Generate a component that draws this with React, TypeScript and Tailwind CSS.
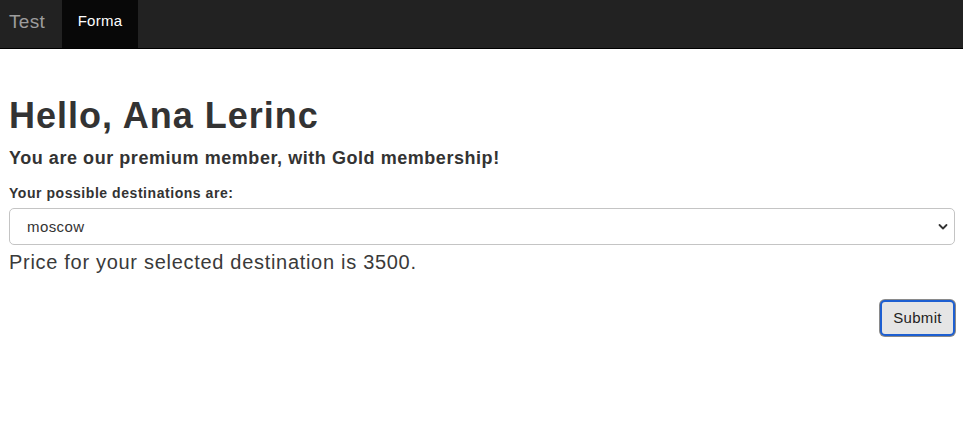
export default function App() {
  return (
    <div className="min-h-screen bg-white font-['Liberation_Sans',Arial,sans-serif] text-[#333]">
      <nav className="flex h-[49px] border-b border-black bg-[#222]">
        <span className="flex items-center pb-[4px] pl-[9px] pr-[17px] text-[19px] tracking-[0.3px] text-[#9d9d9d]">
          Test
        </span>
        <span className="flex w-[76px] items-center justify-center bg-[#080808] pb-[5px] text-[15px] tracking-[0.3px] text-white">
          Forma
        </span>
      </nav>

      <main className="pl-[9px] pr-[8px]">
        <h1 className="mt-[47px] text-[36px] leading-[1.1] font-bold tracking-[1px]">
          Hello, Ana Lerinc
        </h1>
        <h4 className="mt-[13px] text-[18px] leading-[1.1] font-bold tracking-[0.55px]">
          You are our premium member, with Gold membership!
        </h4>
        <label className="mt-[15px] block text-[14px] leading-[20px] font-bold tracking-[0.55px]">
          Your possible destinations are:
        </label>
        <div className="relative mt-[5px]">
          <select
            defaultValue="moscow"
            className="h-[37px] w-full appearance-none rounded-[5px] border border-[#c4c4c4] bg-white pl-[17px] text-[15px] tracking-[0.4px] text-[#333] outline-none"
          >
            <option value="moscow">moscow</option>
            <option value="paris">paris</option>
            <option value="london">london</option>
          </select>
          <svg
            className="pointer-events-none absolute top-[15px] right-[7px]"
            width="10"
            height="8"
            viewBox="0 0 10 8"
          >
            <path
              d="M1.5 2 L5 5.5 L8.5 2"
              fill="none"
              stroke="#333"
              strokeWidth="1.8"
              strokeLinecap="round"
              strokeLinejoin="round"
            />
          </svg>
        </div>
        <p className="mt-[3px] text-[20px] leading-[28px] tracking-[0.7px] text-[#3a3a3a]">
          Price for your selected destination is 3500.
        </p>

        <div className="mt-[24px] flex justify-end">
          <button
            type="submit"
            className="h-[36px] w-[75px] rounded-[5px] border-2 border-[#1d5fd1] bg-[#e5e5e5] text-[15px] tracking-[0.3px] text-[#222] shadow-[0_0_0_1px_#8a8a8a]"
          >
            Submit
          </button>
        </div>
      </main>
    </div>
  );
}
